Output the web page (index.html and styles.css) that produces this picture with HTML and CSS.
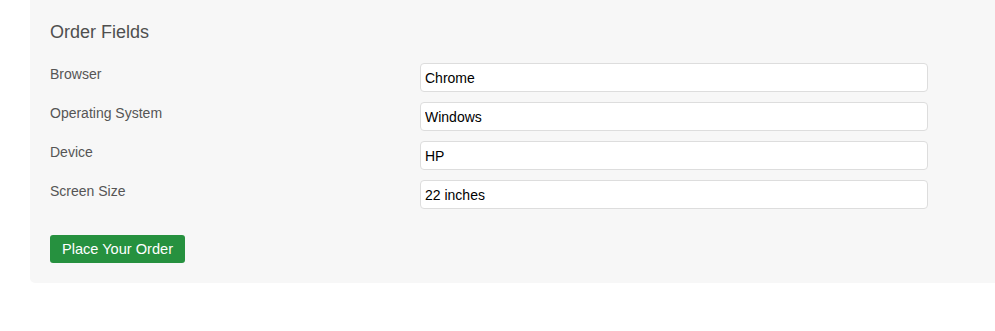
FILE: index.html
```html
<!DOCTYPE html>
<html lang="en">
<head>
<meta charset="utf-8">
<title>Order Fields</title>
<link rel="stylesheet" href="styles.css">
</head>
<body>
<div class="panel">
  <h2 class="title">Order Fields</h2>
  <div class="fields">
    <label class="label" for="browser">Browser</label>
    <input class="input" id="browser" type="text" value="Chrome">
    <label class="label" for="os">Operating System</label>
    <input class="input" id="os" type="text" value="Windows">
    <label class="label" for="device">Device</label>
    <input class="input" id="device" type="text" value="HP">
    <label class="label" for="screen">Screen Size</label>
    <input class="input" id="screen" type="text" value="22 inches">
  </div>
  <button class="btn" type="button">Place Your Order</button>
</div>
</body>
</html>
```

FILE: styles.css
```css
html, body {
  margin: 0;
  padding: 0;
  background: #ffffff;
  overflow: hidden;
}
body {
  font-family: "Liberation Sans", Arial, sans-serif;
  font-size: 14px;
  color: #555555;
}
.panel {
  margin-left: 30px;
  background: #f7f7f7;
  padding: 21px 0 20px 20px;
  border-bottom-left-radius: 5px;
}
.title {
  margin: 0 0 20px 0;
  font-size: 18px;
  line-height: 22px;
  font-weight: normal;
  color: #4f4f4f;
}
.fields {
  display: grid;
  grid-template-columns: 370px 508px;
  row-gap: 10px;
}
.label {
  padding-top: 1px;
  font-size: 14px;
  line-height: 20px;
  color: #555555;
}
.input {
  box-sizing: border-box;
  height: 29px;
  width: 508px;
  margin: 0;
  padding: 0 4px;
  border: 1px solid #dddddd;
  border-radius: 4px;
  background: #ffffff;
  font-family: "Liberation Sans", Arial, sans-serif;
  font-size: 14px;
  color: #000000;
  outline: none;
}
.btn {
  display: block;
  margin-top: 26px;
  box-sizing: border-box;
  width: 135px;
  height: 28px;
  padding: 0;
  border: none;
  border-radius: 3px;
  background: #26913f;
  color: #ffffff;
  font-family: "Liberation Sans", Arial, sans-serif;
  font-size: 14.6px;
  line-height: 28px;
  text-align: center;
  cursor: pointer;
}
```
